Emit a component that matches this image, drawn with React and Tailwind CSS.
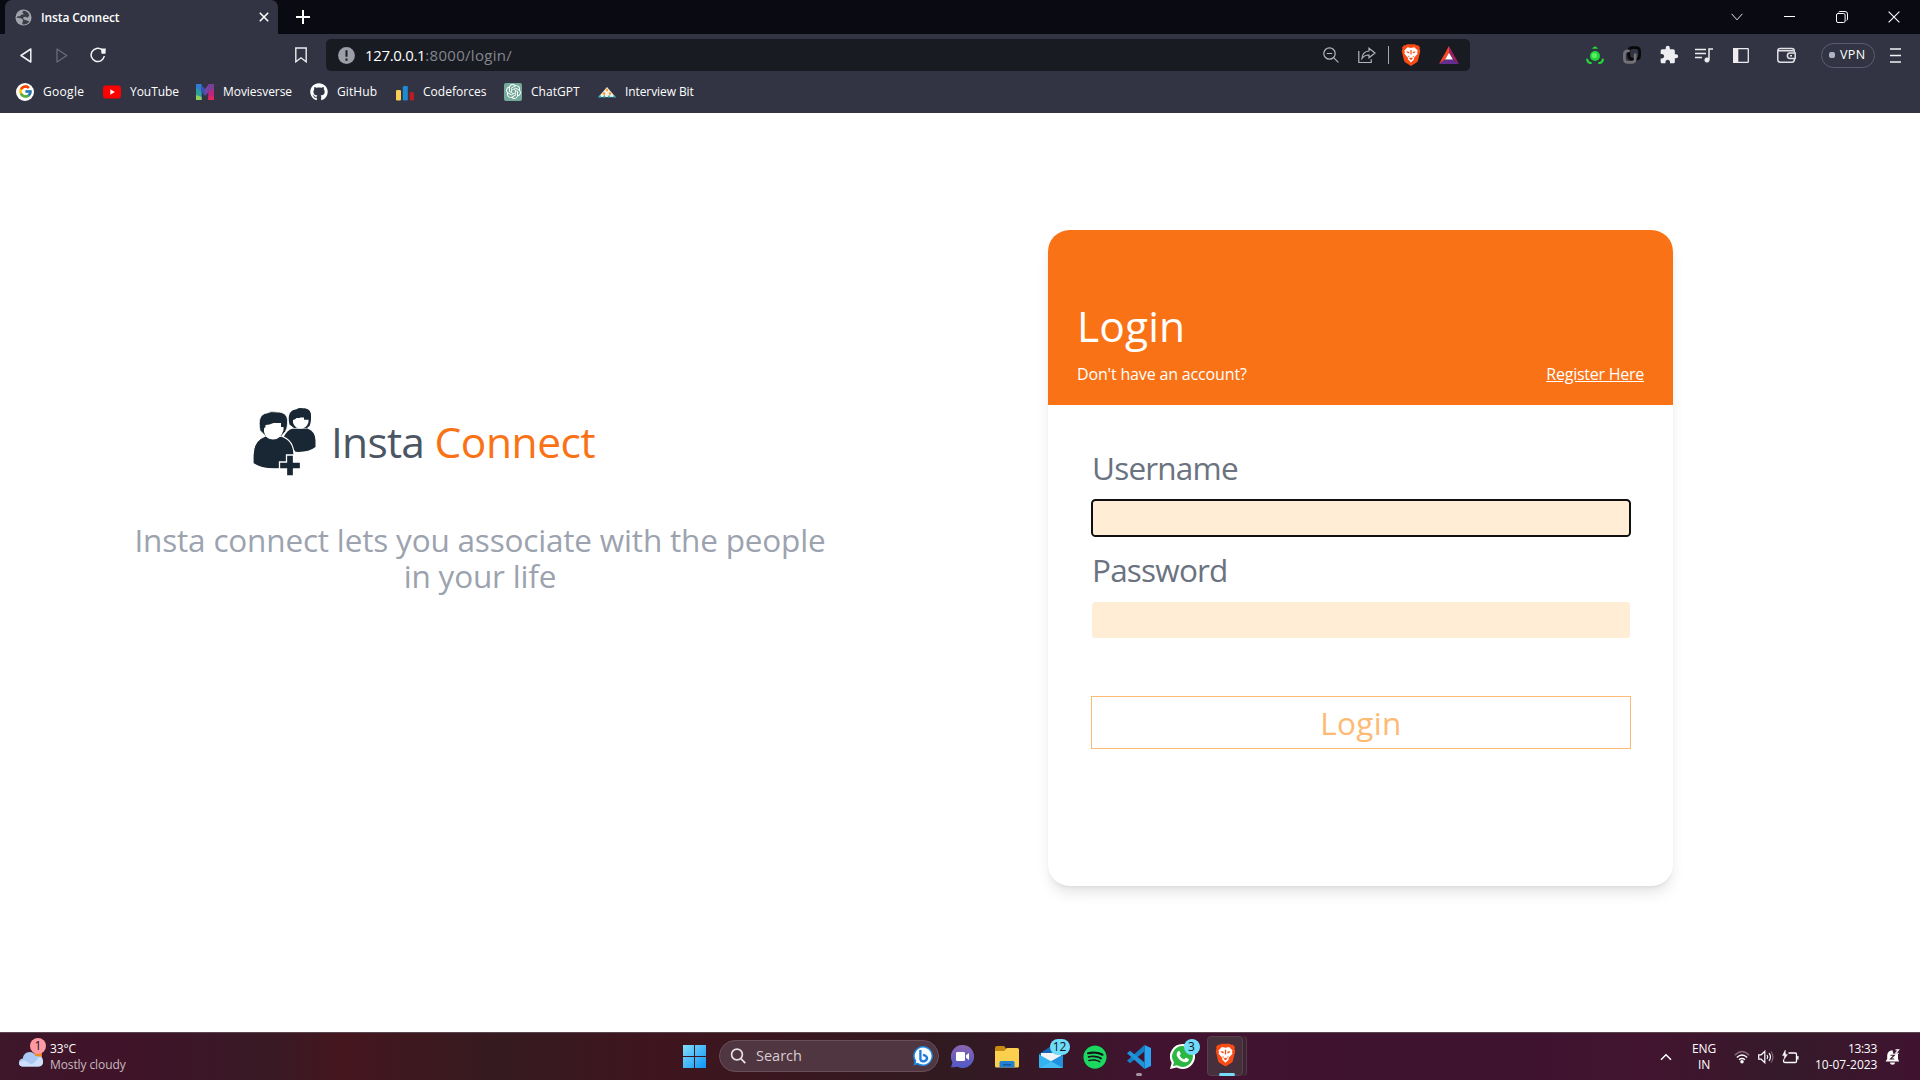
import { FcGoogle } from "react-icons/fc";
import { FaGithub, FaSpotify } from "react-icons/fa";
import { SiOpenai } from "react-icons/si";
import { MdExtension } from "react-icons/md";

function BraveLion({ className }) {
  return (
    <svg viewBox="0 0 20 22" className={className}>
      <path d="M4.6 1.3 6.2.3h7.6l1.6 1 1.6-.1 2 2.2-.5 1.6.8 2.1-2.3 9.5q-.4 1.3-1.5 2L10 22l-5.500-3.400q-1.100-.7-1.500-2L.7 7.100 1.500 5 1 3.400l2-2.200z" fill="#fb4b14" />
      <path d="m6.600 3.300 3.400.8 3.400-.8 3.300 3.300-.5 1.600.4 1.500-3.700 4.200.3 1.300L10 18.400l-3.200-3.200.3-1.300-3.700-4.200.4-1.500-.5-1.600z" fill="#fff" />
      <path d="m5.400 7.300 3 .7-.2 1.300-1.700-.2zm9.200 0-3 .7.2 1.300 1.700-.2zM9.400 6h1.200v4.600H9.400zM7.300 11.600l1.600 1.700-1.600-.2zm5.400 0-1.600 1.700 1.600-.2zM8 14.600l2-1 2 1-2 1.300z" fill="#fb4b14" />
    </svg>
  );
}

function Globe() {
  return (
    <svg viewBox="0 0 18 18" className="size-[17px]">
      <circle cx="9" cy="9" r="8.500" fill="#a2a4ac" />
      <path d="M9.500 1.800c-2 .6-2 2-1 2.700 1.400.8.2 1.600-1.200 1.400-1.600-.2-1.200 2-2.700 1.900C3.300 7.600 2 8 1.800 9.300 3 9.100 4.500 9.200 6 9.900c2 .8 3 1.400 2.300 3-.6 1-.2 2-.8 3.300 3.600.6 6-.8 7.600-3-1-.8-1.600-.4-2.700-1-1.400-.9-3-.4-3.600-1.800-.5-1.300.8-2.300 2.200-2.100 1.300.2 1.600 1.200 2.700.6.800-.4.400-1.600 1.500-1.900C14.600 3.800 12.300 2 9.500 1.800z" fill="#3a3c49" />
    </svg>
  );
}

function YouTube() {
  return (
    <svg viewBox="0 0 18 18" className="size-[18px]">
      <rect x="0" y="2.600" width="18" height="12.800" rx="3" fill="#f00" />
      <path d="M7.300 6.300v5.400L11.800 9z" fill="#fff" />
    </svg>
  );
}

function Moviesverse() {
  return (
    <svg viewBox="0 0 18 18" className="size-[18px]">
      <path d="M0 1h5.500v16H0z" fill="#2f7fd0" />
      <path d="M0 5l5.500 4v8H0z" fill="#2b9f9b" />
      <path d="M0 12l5.500 2v3H0z" fill="#8fd05a" />
      <path d="M5 1l4 5v7L5 8.500z" fill="#3c52ad" />
      <path d="M13 1 9 6v7l4-4.500z" fill="#7a43a6" />
      <path d="M12.500 1H18v16h-5.500z" fill="#7b3f98" />
      <path d="M12.500 9L18 6v11h-5.500z" fill="#c0257e" />
      <path d="M12.500 13l5.500 1v3h-5.500z" fill="#e8265c" />
    </svg>
  );
}

function Codeforces() {
  return (
    <svg viewBox="0 0 18 18" className="size-[18px]">
      <rect x="0" y="7" width="5" height="10.500" rx="1.200" fill="#f8cf55" />
      <rect x="6.800" y="3" width="5" height="14.500" rx="1.200" fill="#1d8bd1" />
      <rect x="13.500" y="9" width="4.500" height="8.500" rx="1.200" fill="#b71d23" />
    </svg>
  );
}

function ChatGpt() {
  return (
    <span className="flex size-[18px] items-center justify-center rounded-[2px] bg-[#75a99a]">
      <SiOpenai className="size-[15px] text-white" />
    </span>
  );
}

function InterviewBit() {
  return (
    <svg viewBox="0 0 18 18" className="size-[18px]">
      <path d="m9 4 8.500 10h-17z" fill="#f4efe0" />
      <path d="m9 5.200-1.500 1.800L9 8.800 10.500 7zM6 8.800l-1.500 1.800L6 12.400l1.500-1.800zm6 0-1.500 1.800 1.500 1.800 1.500-1.800z" fill="#f0a03a" />
      <path d="m0 14.500 2-2.800 1.800 2.800zm4.500 0L6.300 11.800l1.800 2.700zm4.800 0 1.800-2.700 1.800 2.700zm4.900 0 1.800-2.800 2 2.800z" fill="#3db6c0" />
    </svg>
  );
}

const bookmarks = [
  { label: "Google", icon: <FcGoogle className="size-[15px]" />, round: true, width: "w-[87px]", track: "tracking-[0.3px]" },
  { label: "YouTube", icon: <YouTube />, width: "w-[93px]", track: "tracking-[-0.05px]" },
  { label: "Moviesverse", icon: <Moviesverse />, width: "w-[114px]", track: "tracking-[-0.05px]" },
  { label: "GitHub", icon: <FaGithub className="size-[18px] text-white" />, width: "w-[86px]", track: "tracking-[0.08px]" },
  { label: "Codeforces", icon: <Codeforces />, width: "w-[108px]", track: "tracking-[0.03px]" },
  { label: "ChatGPT", icon: <ChatGpt />, width: "w-[94px]", track: "tracking-[0.05px]" },
  { label: "Interview Bit", icon: <InterviewBit />, width: "w-[100px]", track: "tracking-[-0.09px]" },
];

function TabStrip() {
  return (
    <div className="flex h-[34px] bg-[#0a0a13] text-white">
      <div className="ml-[5px] flex w-[273px] items-center rounded-t-[7px] bg-[#323443] pl-[10px]">
        <Globe />
        <span className="ml-[9px] mt-px grow text-[12px] font-semibold tracking-[-0.1px]">Insta Connect</span>
        <svg viewBox="0 0 10 10" className="mr-[9px] size-[10px]"><path d="m.8.8 8.400 8.400m0-8.400L.8 9.200" stroke="#fff" strokeWidth="1.600" /></svg>
      </div>
      <div className="flex w-[50px] items-center justify-center">
        <svg viewBox="0 0 14 14" className="size-[14px]"><path d="M7 0v14M0 7h14" stroke="#fff" strokeWidth="2" /></svg>
      </div>
      <div className="ml-auto flex items-center pb-[1px]">
        <span className="flex w-[53px] justify-center">
          <svg viewBox="0 0 12 8" className="h-[8px] w-[12px]"><path d="m.6.8 5.400 6 5.400-6" fill="none" stroke="#e6e6ea" strokeWidth="1" /></svg>
        </span>
        <span className="flex w-[53px] justify-center">
          <span className="h-px w-[11px] bg-white" />
        </span>
        <span className="flex w-[52px] justify-center">
          <svg viewBox="0 0 12 12" className="size-[12px]" fill="none" stroke="#fff">
            <rect x=".5" y="2.500" width="8.600" height="9" rx="1.500" />
            <path d="M2.500 1.200Q3 .5 4 .5h5Q11.500.5 11.500 3v5q0 1-.8 1.500" />
          </svg>
        </span>
        <span className="flex w-[52px] justify-center">
          <svg viewBox="0 0 12 12" className="size-[12px]"><path d="m.6.6 10.800 10.800m0-10.800L.6 11.400" stroke="#fff" strokeWidth="1.100" /></svg>
        </span>
      </div>
    </div>
  );
}

function AddressBar() {
  return (
    <div className="ml-[19px] flex h-[32px] w-[1144px] items-center rounded-[5px] bg-[#191b22] pl-[12px] pr-[11px]">
      <svg viewBox="0 0 17 17" className="size-[17px]">
        <circle cx="8.500" cy="8.500" r="8.400" fill="#9c9ea8" />
        <path d="M8.500 3.200v6.600M8.500 11.600v2.100" stroke="#191b22" strokeWidth="2" />
      </svg>
      <span className="ml-[10px] text-[15px] leading-5 text-white"><span className="tracking-[-0.33px]">127.0.0.1</span><span className="tracking-[0.3px] text-[#84868d]">:8000/login/</span></span>
      <svg viewBox="0 0 16 16" className="ml-auto size-[16px]" fill="none" stroke="#b4b6bd" strokeWidth="1.200">
        <circle cx="6.500" cy="6.500" r="5.700" />
        <path d="M3.800 6.500h5.400M10.600 10.600l4.800 4.800" />
      </svg>
      <svg viewBox="0 0 18 18" className="ml-[19px] size-[18px]" fill="none" stroke="#b4b6bd" strokeWidth="1.200">
        <path d="M.8 5v11.500h12.400v-3.200" />
        <path d="M11 2.200 17 7l-6 4.800V9C7.500 8.800 5.800 10 4 12.500 4.300 8 6.800 5.200 11 5z" />
      </svg>
      <span className="ml-[12px] h-[18px] w-px bg-[#a5a7ae]" />
      <BraveLion className="ml-[12px] h-[22px] w-[20px]" />
      <svg viewBox="0 0 20 18" className="ml-[18px] h-[18px] w-[20px]">
        <path d="M10 0v6.800L6 13.600 0 18z" fill="#ff4724" />
        <path d="M10 0v6.800l4 6.800 6 4.400z" fill="#9e1f63" />
        <path d="M0 18h20l-6-4.400H6z" fill="#662d91" />
        <path d="m10 6.800 4 6.800H6z" fill="#fff" />
      </svg>
    </div>
  );
}

function Extensions() {
  return (
    <div className="ml-[107px] flex items-center">
      <span className="flex w-[36px] justify-center">
        <svg viewBox="0 0 18 18" className="size-[18px]" fill="#22d63a">
          <circle cx="9" cy="10" r="5" />
          <circle cx="8.400" cy="9.400" r="2.600" fill="#57ee68" />
          <path d="M6 2.800Q9-2 12 2.800z" />
          <path d="M1.200 13.500Q1.500 16.800 4.800 17M16.800 13.500q-.3 3.300-3.600 3.500" fill="none" stroke="#22d63a" strokeWidth="2.200" strokeLinecap="round" />
        </svg>
      </span>
      <span className="flex w-[37px] justify-center">
        <svg viewBox="0 0 18 18" className="size-[18px]" fill="none" strokeWidth="2.700" strokeLinecap="round">
          <path d="M5.800 9.500V5.300q0-3.600 3.600-3.600h3.600q3.600 0 3.600 3.600v4.200q0 3.600-3.600 3.600h-.6" stroke="#08080b" />
          <path d="M12.200 8.500v4.200q0 3.600-3.600 3.600H5q-3.600 0-3.600-3.600V8.500q0-3.600 3.600-3.600h.6" stroke="#727277" />
          <path d="M5.800 8v1.500q0 3.600 3.600 3.600" stroke="#08080b" />
        </svg>
      </span>
      <span className="flex w-[37px] justify-center">
        <MdExtension className="size-[20px] text-[#eeeef1]" />
      </span>
      <span className="flex w-[34px] justify-center">
        <svg viewBox="0 0 18 15" className="h-[15px] w-[18px]" fill="none" stroke="#ededf0" strokeWidth="1.500">
          <path d="M0 1.500h11M0 5.500h11M0 9.500h7M18 1h-4v10.500" />
          <circle cx="12" cy="12" r="2.300" fill="#ededf0" strokeWidth=".6" />
        </svg>
      </span>
      <span className="flex w-[40px] justify-center">
        <svg viewBox="0 0 16 15" className="h-[15px] w-[16px]">
          <rect x=".7" y=".7" width="14.600" height="13.600" rx=".6" fill="none" stroke="#ededf0" strokeWidth="1.300" />
          <path d="M0 0h5.300v15H0z" fill="#ededf0" />
        </svg>
      </span>
      <span className="flex w-[51px] justify-center">
        <svg viewBox="0 0 19 16" className="h-[16px] w-[19px]" fill="none" stroke="#e2e2e6" strokeWidth="1.500">
          <path d="M17.300 5.500V4q0-2.600-2.600-2.600H3.300Q.8 1.400.8 3.600v9.200q0 2.400 2.500 2.400h11.500q2.500 0 2.500-2.400V12M.8 3.800h15.500" />
          <path d="M18.200 6H13q-2.600 0-2.600 2.700T13 11.500h5.200z" />
          <path d="M13 8.700h2" />
        </svg>
      </span>
      <span className="ml-[9px] flex h-[25px] w-[54px] items-center rounded-full border border-[#5a5d72] pl-[7px]">
        <span className="size-[6px] rounded-[2px] bg-[#aeb1c4]" />
        <span className="ml-[5px] text-[12.500px] font-medium leading-none tracking-[0.4px] text-white">VPN</span>
      </span>
      <svg viewBox="0 0 11 15" className="ml-[15px] h-[15px] w-[11px]" stroke="#f2f2f4" strokeWidth="1.300"><path d="M0 1h11M0 7.500h11M0 14h11" /></svg>
    </div>
  );
}

function Toolbar() {
  return (
    <div className="flex h-[42px] items-center pl-[20px]">
      <svg viewBox="0 0 12 15" className="h-[15px] w-[12px]"><path d="M10.800 1v13L1 7.500z" fill="none" stroke="#f0f0f3" strokeWidth="1.500" strokeLinejoin="round" /></svg>
      <svg viewBox="0 0 12 15" className="ml-[24px] h-[15px] w-[12px]"><path d="M1 1v13l9.800-6.500z" fill="none" stroke="#696b78" strokeWidth="1.300" strokeLinejoin="round" /></svg>
      <svg viewBox="0 0 16 16" className="ml-[22px] size-[16px]">
        <path d="M14.300 9A6.600 6.600 0 1 1 12 2.900" fill="none" stroke="#f5f5f7" strokeWidth="1.500" />
        <path d="M11 1.500h4.800l-.3 5.300h-4z" fill="#f5f5f7" />
      </svg>
      <svg viewBox="0 0 12 16" className="ml-[189px] h-[16px] w-[12px]"><path d="M.8 1h10.400v13.800L6 10.800.8 14.800z" fill="none" stroke="#ededf0" strokeWidth="1.400" /></svg>
      <AddressBar />
      <Extensions />
    </div>
  );
}

function Bookmarks() {
  return (
    <div className="flex h-[31px] items-center pl-[16px]">
      {bookmarks.map((b) => (
        <div key={b.label} className={`flex shrink-0 items-center ${b.width}`}>
          <span className={b.round ? "flex size-[18px] items-center justify-center rounded-full bg-white" : "flex size-[18px]"}>{b.icon}</span>
          <span className={`ml-[9px] whitespace-nowrap text-[12px] leading-4 text-white ${b.track}`}>{b.label}</span>
        </div>
      ))}
    </div>
  );
}

function PeopleLogo() {
  return (
    <svg viewBox="0 0 63 68" className="h-[68px] w-[63px]">
      <g fill="#182733">
        <path d="M31 28.500Q34 22.500 39 20.800l15.500-.3q8 3 8 12v6.500q-7 5.500-20 4.800L35 34z" />
        <path d="M36.500 16.500C34.500 8 36.500 2 43 1.500q3-2 7-1.200c5 0 8 2.700 8 6.700 0 4 .3 7-1.500 11L54 20H41z" />
        <path d="M40 12q2.500-.5 3.500-2H47V9.500h4v2.200h4.500v2.500q-2 6.500-8 6.500-5.500 0-7.500-6z" fill="#fff" />
        <path d="M0 55.500V47.500Q0 32.500 12.500 28h15.500Q41 32 41 47.500V54L30 60Q12 63 0 55.500z" stroke="#fff" strokeWidth="1.200" />
        <path d="M7 22.500C5 12 7 6 14 5q4-2.200 10-1c6 0 10.500 2.500 10.500 8.500 0 4 .2 7-2 11L28 28.500H13z" stroke="#fff" strokeWidth=".8" />
        <path d="M11 21.500q-.3-2 1.500-2.500v-2q4 0 8-2h7.500v4h2.500v3q-2.500 9.500-10.500 9.500-7 0-9-7.500z" fill="#fff" />
        <path d="M33.500 47h7v7h7v7h-7v7h-7v-7h-7v-7h7z" stroke="#fff" strokeWidth="1.300" />
      </g>
    </svg>
  );
}

function Hero() {
  return (
    <section className="flex w-[960px] flex-col">
      <div className="ml-[253px] mt-[295px] flex h-[68px]">
        <PeopleLogo />
        <h1 className="ml-[15px] mt-[10px] whitespace-nowrap text-[42.500px] leading-[48px] tracking-[-0.750px] text-[#4b5563]">
          Insta <span className="tracking-[-0.450px] text-[#f97316]">Connect</span>
        </h1>
      </div>
      <p className="mx-auto mt-[46px] w-[720px] text-center text-[31.500px] leading-[36px] tracking-[-0.180px] text-[#9ca3af]">
        Insta connect lets you associate with the people
        <br />
        in your life
      </p>
    </section>
  );
}

function LoginCard() {
  return (
    <section className="ml-[88px] mt-[117px] h-[656px] w-[625px] overflow-hidden rounded-[21.600px] bg-white shadow-[0_9px_13.500px_-2.700px_rgba(0,0,0,0.1),0_3.600px_5.400px_-3.600px_rgba(0,0,0,0.1)]">
      <div className="h-[175px] bg-[#f97316] px-[29px] pt-[72px] text-white">
        <h2 className="text-[42.500px] leading-[48px] tracking-[0.100px]">Login</h2>
        <div className="mt-[12px] flex justify-between text-[16px] leading-[24px]">
          <span className="tracking-[-0.160px]">Don't have an account?</span>
          <a className="tracking-[-0.250px] underline">Register Here</a>
        </div>
      </div>
      <form className="flex flex-col pl-[44px] pr-[43px] pt-[45px] text-[31.500px] leading-[36px] text-[#6b7280]" onSubmit={(e) => e.preventDefault()}>
        <label className="tracking-[-0.800px]">Username</label>
        <input className="mt-[14px] h-[36px] rounded-[3.600px] bg-[#ffedd5] outline-2 -outline-offset-1 outline-[#101010]" />
        <label className="mt-[16px] tracking-[-0.800px]">Password</label>
        <input type="password" className="mt-[14px] h-[36px] rounded-[3.600px] bg-[#ffedd5]" />
        <button className="-mx-px mt-[58px] h-[53px] border border-[#fdba74] tracking-[0.300px] text-[#fdba74]">Login</button>
      </form>
    </section>
  );
}

function CountBadge({ children, className }) {
  return <span className={`absolute flex h-[16px] items-center justify-center rounded-full text-[12px] leading-none text-[#151515] ${className}`}>{children}</span>;
}

function Weather() {
  return (
    <div className="flex w-[674px] items-center">
      <div className="relative ml-[19px] mt-[4px] w-[31px]">
        <svg viewBox="0 0 24 16" className="h-[16px] w-[24px]">
          <circle cx="19" cy="4" r="4" fill="#f08a24" />
          <path d="M4 15.500Q0 15.300 0 11.500 0 8 3.800 7.500 4.800 1 10.500 1q4.500 0 6 4 6.800-.3 7.500 5.500 0 5-5 5z" fill="#a9c8f3" />
          <path d="M4 15.500Q0 15.300 0 11.500q5-4 9 0t9-3 6 2q0 5-5 5z" fill="#cfe1fa" />
        </svg>
        <CountBadge className="-top-[13px] left-[11px] w-[16px] bg-[#ff99a4]">1</CountBadge>
      </div>
      <div className="text-[12px] leading-[16px] text-white">
        <div className="tracking-[-0.100px]">33°C</div>
        <div className="tracking-[-0.100px] text-[#c9b9c0]">Mostly cloudy</div>
      </div>
    </div>
  );
}

function TaskIcon({ children }) {
  return <span className="relative flex h-full w-[44px] items-center justify-center">{children}</span>;
}

function PinnedApps() {
  return (
    <div className="flex items-center">
      <span className="flex w-[41px] justify-center">
        <svg viewBox="0 0 23 23" className="size-[23px]">
          <defs>
            <linearGradient id="winBlue" x1="0" y1="0" x2="23" y2="23" gradientUnits="userSpaceOnUse">
              <stop stopColor="#83dffb" />
              <stop offset="1" stopColor="#0c93f5" />
            </linearGradient>
          </defs>
          <path d="M0 0h11v11H0zM12 0h11v11H12zM0 12h11v11H0zM12 12h11v11H12z" fill="url(#winBlue)" />
        </svg>
      </span>
      <div className="mb-px ml-[4px] flex h-[32px] w-[220px] items-center rounded-full border border-[#6a4d57] bg-[#503640] pl-[10px] pr-[5px]">
        <svg viewBox="0 0 16 16" className="size-[16px]" fill="none" stroke="#e8e0e3" strokeWidth="1.700"><circle cx="7" cy="6.500" r="5.400" /><path d="m10.900 10.600 4.400 4.600" /></svg>
        <span className="ml-[10px] mt-px grow text-[14.500px] leading-none text-[#d8cdd1]">Search</span>
        <svg viewBox="0 0 20 20" className="size-[20px]">
          <path d="M10 0a10 10 0 1 1-5.500 18.400L.5 19.500 1.500 15A10 10 0 0 1 10 0z" fill="#1a84dd" />
          <path d="M10 1.500a8.500 8.500 0 1 1-5.200 15.200l-2 .6.5-2.400A8.500 8.500 0 0 1 10 1.500z" fill="#f5fbff" />
          <path d="M7.400 4v9.500q.8 2.300 3.500 1.800 3.500-1 3.100-3.700-.5-2-4-2.800" fill="none" stroke="#2079d8" strokeWidth="2.300" />
        </svg>
      </div>
      <span className="ml-[1.500px] flex h-[46px]">
        <TaskIcon>
          <svg viewBox="0 0 23 23" className="size-[23px]">
            <defs>
              <linearGradient id="chatViolet" x1="0" y1="0" x2="0" y2="1"><stop stopColor="#8d63ae" /><stop offset="1" stopColor="#5059c9" /></linearGradient>
            </defs>
            <path d="M11.500 0a11.500 11.500 0 1 1-5 21.800L0 22.500l1.500-5.200A11.500 11.500 0 0 1 11.500 0z" fill="url(#chatViolet)" />
            <rect x="5" y="7" width="9" height="9" rx="1.200" fill="#fff" />
            <path d="m15 10.300 3-2.300v7l-3-2.300z" fill="#fff" />
          </svg>
        </TaskIcon>
        <TaskIcon>
          <svg viewBox="0 0 24 22" className="h-[22px] w-[24px]">
            <path d="M0 2Q0 0 2 0h7l2.500 3L9 6H0z" fill="#c88a10" />
            <path d="M0 5h9l3-3h10.500Q24 2 24 3.500V20q0 1.500-1.500 1.500h-21Q0 21.500 0 20z" fill="#fbd04e" />
            <path d="M4.500 16.500q0-1.500 1.500-1.500h12q1.500 0 1.500 1.500v5h-15z" fill="#2480d0" />
            <path d="M8 18h8v1.500H8z" fill="#145a9e" />
          </svg>
        </TaskIcon>
        <TaskIcon>
          <svg viewBox="0 0 24 22" className="h-[22px] w-[24px]">
            <path d="M0 8 12 0l12 8v4H0z" fill="#1667b5" />
            <path d="M2 7h20v6l-10 5L2 13z" fill="#f1f3f6" />
            <path d="M0 8.500 24 22H1.500Q0 22 0 20.500z" fill="#32b5ef" />
            <path d="M24 8.500 0 22h22.500q1.500 0 1.500-1.500z" fill="#2190de" />
            <path d="M12 15.300 0 22h24z" fill="#45bdf3" />
          </svg>
          <CountBadge className="left-[21px] top-[5px] w-[20px] bg-[#6fdcfb]">12</CountBadge>
        </TaskIcon>
        <TaskIcon>
          <span className="flex size-[24px] items-center justify-center rounded-full bg-[#15141b]">
            <FaSpotify className="size-[24px] text-[#1ed760]" />
          </span>
        </TaskIcon>
        <TaskIcon>
          <svg viewBox="0 0 24 24" className="size-[24px]">
            <path d="M17.500 0 24 3v18l-6.500 3z" fill="#2aa5ef" />
            <path d="M17.500 0v6.500L3 18.200 0 15.800z" fill="#1580c8" />
            <path d="M17.500 24v-6.500L3 5.800 0 8.200z" fill="#1f92da" />
          </svg>
          <span className="absolute bottom-[4px] h-[3px] w-[6px] rounded-full bg-[#a595a0]" />
        </TaskIcon>
        <TaskIcon>
          <svg viewBox="0 0 24 24" className="size-[25px]">
            <path d="M12 0a12 12 0 1 1-5.600 22.600L0 24l1.600-6A12 12 0 0 1 12 0z" fill="#fff" />
            <path d="M12 2a10 10 0 1 1-5.300 18.500L2.800 21.400l1-3.700A10 10 0 0 1 12 2z" fill="#2cb742" />
            <path d="M8.200 6.800q.9-.4 1.300.6l.8 1.900q0 .7-1.100 1.700 1.500 2.900 4.300 3.900l1.300-1.500q.4-.4 1-.1l2 1q.5.400.2 1.200-.9 2.200-3.400 2-6-1-8.200-6.800-.3-2.800 1.800-3.900z" fill="#fff" />
          </svg>
          <CountBadge className="left-[23px] top-[5px] w-[16px] bg-[#6fdcfb]">3</CountBadge>
        </TaskIcon>
        <span className="ml-[2px] mt-[2px] flex h-[40px] w-[40px] rounded-[4px] border-r border-[#55394a] bg-[#3d2431]">
          <span className="relative flex w-[36px] items-center justify-center rounded-[4px] border border-[#56404b] bg-[#46303b] pl-[2px] pb-px">
            <BraveLion className="h-[24px] w-[21px]" />
            <span className="absolute -bottom-px left-[11px] h-[3px] w-[16px] rounded-full bg-[#76dcfb]" />
          </span>
        </span>
      </span>
    </div>
  );
}

function Tray() {
  return (
    <div className="ml-auto flex items-center text-[12px] leading-[16px] text-white">
      <svg viewBox="0 0 12 8" className="h-[8px] w-[12px]"><path d="m1 6.800 5-5 5 5" fill="none" stroke="#fff" strokeWidth="1.500" /></svg>
      <div className="ml-[18px] w-[28px] text-center tracking-[-0.200px]">
        <div>ENG</div>
        <div>IN</div>
      </div>
      <svg viewBox="0 0 16 14" className="ml-[16px] h-[14px] w-[16px]" fill="none" stroke="#fff" strokeWidth="1.300">
        <path d="M.8 5.300Q8-2.300 15.200 5.300" stroke="#85677a" />
        <path d="M2.800 7.500Q8 2.500 13.200 7.500M5 9.800Q8 7.200 11 9.800" />
        <circle cx="8" cy="11.800" r="1.100" fill="#fff" />
      </svg>
      <svg viewBox="0 0 16 14" className="ml-[8px] h-[14px] w-[16px]" fill="none" stroke="#fff" strokeWidth="1.200">
        <path d="M.7 4.800h2.500l3.600-3.500v11.400L3.200 9.200H.7z" />
        <path d="M9 5q1.500 2 0 4M11 3.200q3 3.800 0 7.600" />
        <path d="M13 1.500q4 5.500 0 11" stroke="#85677a" />
      </svg>
      <svg viewBox="0 0 17 14" className="ml-[8px] h-[14px] w-[17px]" fill="none" stroke="#fff" strokeWidth="1.300">
        <path d="M6.500 3h6.700q1.300 0 1.300 1.300v6.900q0 1.300-1.300 1.300H3q-1.400 0-1.400-1.300V9.500M15.900 6v3.500" />
        <path d="M3.300 0 .5 5.500h2L2 9.500l3.500-5H3.500z" fill="#fff" strokeWidth=".4" />
      </svg>
      <div className="ml-[16px] w-[62px] whitespace-nowrap text-right">
        <div className="tracking-[-0.300px]">13:33</div>
        <div className="tracking-[-0.020px]">10-07-2023</div>
      </div>
      <svg viewBox="0 0 15 16" className="ml-[8px] mr-[20px] h-[16px] w-[15px]">
        <path d="M.5 12.500 2.200 10V6.500Q2.500 1.800 7.500 1.300L8.500 5h4.500v5l1.200 2.500z" fill="#fff" />
        <path d="M4.800 13.500h5.400q-.5 2.300-2.700 2.300t-2.700-2.300z" fill="#fff" />
        <path d="M10.500.9h3.200l-3.200 3.400h3.400" fill="none" stroke="#fff" strokeWidth="1.100" />
        <path d="M5.500 6.200h3.800L5.500 10h3.800" fill="none" stroke="#3d1630" strokeWidth="1.100" />
      </svg>
    </div>
  );
}

export default function App() {
  return (
    <div className="flex h-[1080px] w-[1920px] flex-col overflow-hidden bg-white font-['Open_Sans','Noto_Sans',sans-serif]">
      <header className="h-[113px] bg-[#323443]">
        <TabStrip />
        <Toolbar />
        <Bookmarks />
      </header>
      <main className="flex h-[919px]">
        <Hero />
        <LoginCard />
      </main>
      <footer className="flex h-[48px] border-t border-[#5b4750] bg-[linear-gradient(90deg,#3d172a_0%,#401329_6%,#381a25_14%,#45161e_18%,#351b20_26%,#3f151f_34%,#311a21_50%,#421330_60%,#3d1330_75%,#42142f_86%,#351a2a_93%,#401330_100%)]">
        <Weather />
        <PinnedApps />
        <Tray />
      </footer>
    </div>
  );
}
